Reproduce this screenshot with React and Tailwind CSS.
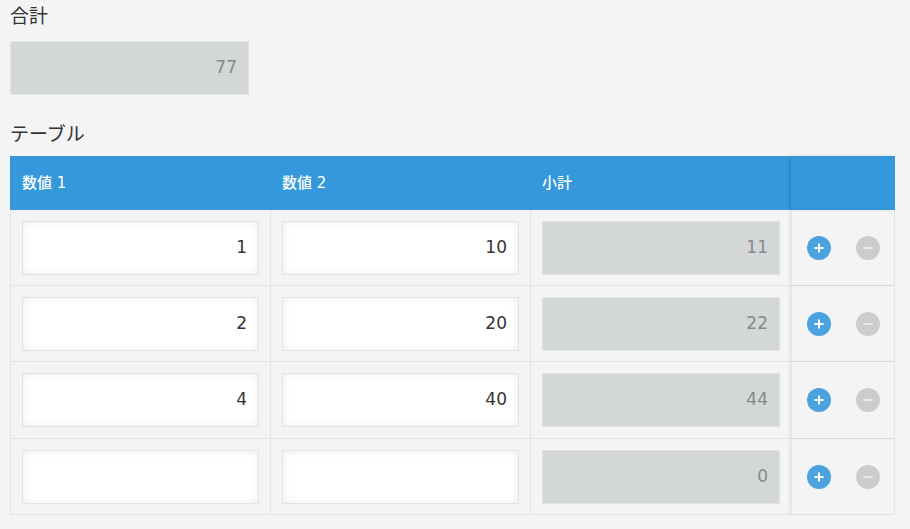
import React from "react";

const rows = [
  { a: "1", b: "10", s: "11", h: "h-[76px]" },
  { a: "2", b: "20", s: "22", h: "h-[76px]" },
  { a: "4", b: "40", s: "44", h: "h-[77px]" },
  { a: "", b: "", s: "0", h: "h-[76px]" },
];

const font = { fontFamily: '"DejaVu Sans", "Noto Sans CJK JP", sans-serif' };

function Input({ value }) {
  return (
    <div className="h-[54px] w-full bg-white border border-[#e3e3e3] shadow-[inset_0_0_8px_rgba(0,0,0,0.08)] flex items-center justify-end pr-[11px] text-[17px] text-[#333]">
      {value}
    </div>
  );
}

function ReadOnly({ value }) {
  return (
    <div className="h-[54px] w-full bg-[#d4d7d8] border border-[#e3e3e3] flex items-center justify-end pr-[11px] text-[17px] text-[#888]">
      {value}
    </div>
  );
}

function Plus() {
  return (
    <svg width="24" height="24" viewBox="0 0 24 24">
      <circle cx="12" cy="12" r="12" fill="#4aa3df" />
      <path d="M12 7.5v9M7.5 12h9" stroke="#fff" strokeWidth="2" />
    </svg>
  );
}

function Minus() {
  return (
    <svg width="24" height="24" viewBox="0 0 24 24">
      <circle cx="12" cy="12" r="12" fill="#cccccc" />
      <path d="M7.5 12h9" stroke="#e8e8e8" strokeWidth="2" />
    </svg>
  );
}

export default function App() {
  return (
    <div className="min-h-[529px] w-[910px] bg-[#f4f4f4] pl-[10px] pt-[1px]" style={font}>
      <div className="text-[19px] text-[#333] leading-[30px]">合計</div>
      <div className="mt-[10px] w-[239px] h-[54px] bg-[#d4d7d8] border border-[#e3e3e3] flex items-center justify-end pr-[11px] text-[17px] text-[#888]">
        77
      </div>
      <div className="mt-[24px] text-[19px] text-[#333] leading-[30px]">テーブル</div>
      <div className="mt-[7px] w-[885px]">
        <div className="flex h-[54px] bg-[#3498db] text-white text-[15px] font-medium">
          <div className="w-[260px] flex items-center pl-[12px]">数値 1</div>
          <div className="w-[260px] flex items-center pl-[12px]">数値 2</div>
          <div className="w-[261px] flex items-center pl-[12px]">小計</div>
          <div className="w-[104px] shadow-[-2px_0_3px_rgba(0,0,0,0.12)]"></div>
        </div>
        {rows.map((r, i) => (
          <div key={i} className={`flex ${r.h} border-b border-[#e3e3e3]`}>
            <div className="w-[260px] border-l border-[#e3e3e3] px-[11px] pt-[11px]">
              <Input value={r.a} />
            </div>
            <div className="w-[260px] border-l border-[#e3e3e3] px-[11px] pt-[11px]">
              <Input value={r.b} />
            </div>
            <div className="w-[261px] border-l border-[#e3e3e3] px-[11px] pt-[11px]">
              <ReadOnly value={r.s} />
            </div>
            <div className="w-[104px] border-l border-r border-[#e3e3e3] shadow-[-2px_0_3px_rgba(0,0,0,0.06)] flex items-center pl-[15px] gap-[25px]">
              <Plus />
              <Minus />
            </div>
          </div>
        ))}
      </div>
    </div>
  );
}
